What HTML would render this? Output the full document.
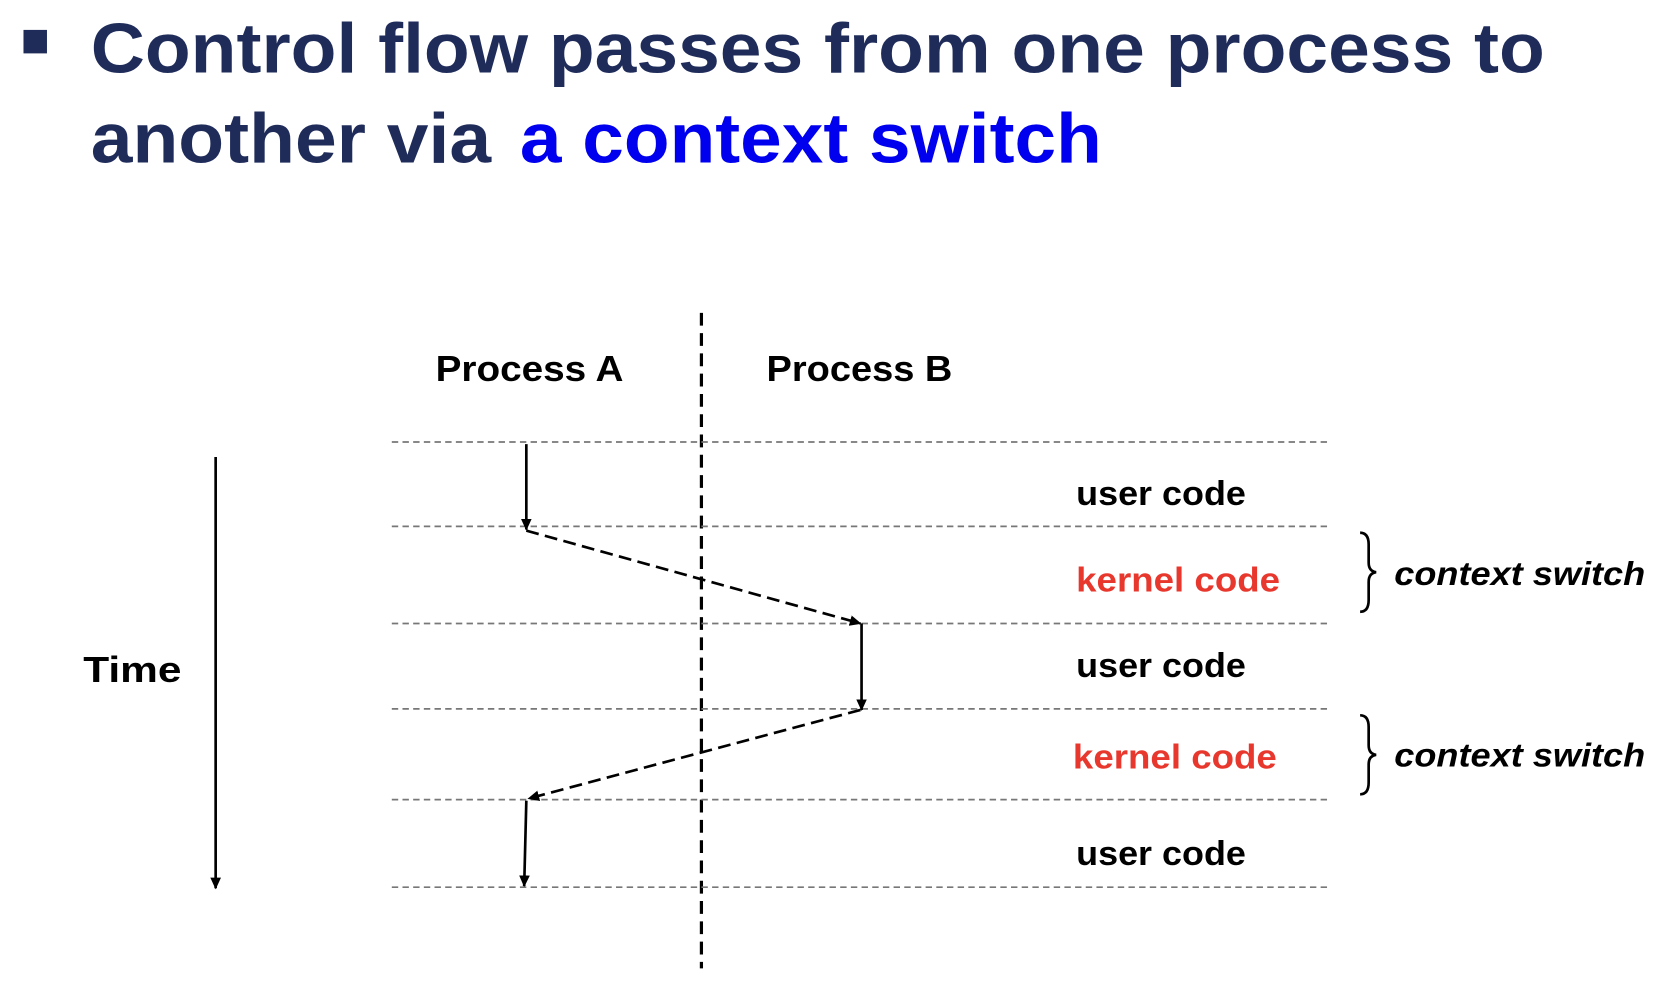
<!DOCTYPE html>
<html><head><meta charset="utf-8"><style>
html,body{margin:0;padding:0;background:#fff;overflow:hidden}
svg{display:block}
text{font-family:"Liberation Sans","DejaVu Sans",sans-serif;font-weight:bold}
</style></head><body>
<svg width="1674" height="990" viewBox="0 0 1568 927.3" xmlns="http://www.w3.org/2000/svg">
<defs>
<marker id="ah" markerWidth="12" markerHeight="12" refX="10" refY="6" orient="auto" markerUnits="userSpaceOnUse">
<path d="M0,1 L11,6 L0,11 z" fill="#000"/>
</marker>
</defs>
<rect x="22" y="28" width="22" height="22" fill="#1f2c5a"/>
<text x="85" y="68" font-size="66" fill="#1f2c5a" textLength="1362" lengthAdjust="spacingAndGlyphs">Control flow passes from one process to</text>
<text x="85" y="152" font-size="66" fill="#1f2c5a" textLength="375" lengthAdjust="spacingAndGlyphs">another via</text>
<text x="487" y="152" font-size="66" fill="#0000ee" textLength="545" lengthAdjust="spacingAndGlyphs">a context switch</text>

<text x="408" y="357" font-size="34" fill="#000" textLength="176" lengthAdjust="spacingAndGlyphs">Process A</text>
<text x="718" y="357" font-size="34" fill="#000" textLength="174" lengthAdjust="spacingAndGlyphs">Process B</text>
<text x="78" y="639" font-size="34" fill="#000" textLength="92" lengthAdjust="spacingAndGlyphs">Time</text>

<line x1="657" y1="293" x2="657" y2="907" stroke="#000" stroke-width="3" stroke-dasharray="12,7"/>
<g stroke="#777" stroke-width="1.6" stroke-dasharray="6,4">
<line x1="367" y1="414" x2="1247" y2="414"/>
<line x1="367" y1="493" x2="1247" y2="493"/>
<line x1="367" y1="584" x2="1247" y2="584"/>
<line x1="367" y1="664" x2="1247" y2="664"/>
<line x1="367" y1="749" x2="1247" y2="749"/>
<line x1="367" y1="831" x2="1247" y2="831"/>
</g>
<g stroke="#000" stroke-width="2.5" fill="none">
<line x1="202" y1="428" x2="202" y2="832" marker-end="url(#ah)"/>
<line x1="493" y1="416" x2="493" y2="496" marker-end="url(#ah)"/>
<line x1="493" y1="497" x2="806" y2="584" stroke-dasharray="12,6" marker-end="url(#ah)"/>
<line x1="807" y1="584" x2="807" y2="665" marker-end="url(#ah)"/>
<line x1="806" y1="665" x2="495" y2="748" stroke-dasharray="12,6" marker-end="url(#ah)"/>
<line x1="493" y1="750" x2="491" y2="830" marker-end="url(#ah)"/>
</g>

<text x="1008" y="473" font-size="32" fill="#000" textLength="159" lengthAdjust="spacingAndGlyphs">user code</text>
<text x="1008" y="554" font-size="32" fill="#e8382e" textLength="191" lengthAdjust="spacingAndGlyphs">kernel code</text>
<text x="1008" y="634" font-size="32" fill="#000" textLength="159" lengthAdjust="spacingAndGlyphs">user code</text>
<text x="1005" y="720" font-size="32" fill="#e8382e" textLength="191" lengthAdjust="spacingAndGlyphs">kernel code</text>
<text x="1008" y="810" font-size="32" fill="#000" textLength="159" lengthAdjust="spacingAndGlyphs">user code</text>

<g stroke="#000" stroke-width="2.5" fill="none">
<path d="M1274,499 Q1282,499 1282,510 L1282,527 Q1282,535 1289,536 Q1282,537 1282,545 L1282,562 Q1282,573 1274,573"/>
<path d="M1274,670 Q1282,670 1282,681 L1282,698 Q1282,706 1289,707 Q1282,708 1282,716 L1282,733 Q1282,744 1274,744"/>
</g>
<text x="1306" y="548" font-size="31" font-style="italic" fill="#000" textLength="235" lengthAdjust="spacingAndGlyphs">context switch</text>
<text x="1306" y="718" font-size="31" font-style="italic" fill="#000" textLength="235" lengthAdjust="spacingAndGlyphs">context switch</text>
</svg>
</body></html>
